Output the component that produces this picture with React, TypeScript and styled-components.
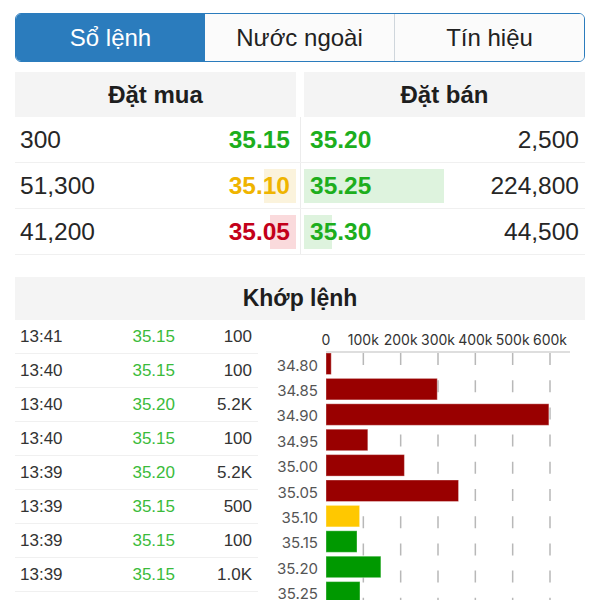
import React from "react";
import styled, { createGlobalStyle } from "styled-components";

const Global = createGlobalStyle`
  html, body { margin: 0; padding: 0; background: #fff; overflow: hidden; }
  body { font-family: "Liberation Sans", Arial, sans-serif; color: #222; }
  * { box-sizing: border-box; }
`;

const Page = styled.div`
  width: 600px;
  height: 600px;
  padding: 13px 15px 0 15px;
  overflow: hidden;
`;

const Tabs = styled.div`
  display: flex;
  height: 49px;
  border: 1px solid #2b7cbd;
  border-radius: 6px;
  overflow: hidden;
`;

const Tab = styled.div<{ $active?: boolean; $divider?: boolean }>`
  flex: 1;
  display: flex;
  align-items: center;
  justify-content: center;
  font-size: 24px;
  background: ${(p) => (p.$active ? "#2b7cbd" : "#fbfbfb")};
  color: ${(p) => (p.$active ? "#fff" : "#222")};
  border-left: ${(p) => (p.$divider ? "1px solid #cfd6dc" : "none")};
`;

const HeaderPair = styled.div`
  display: grid;
  grid-template-columns: 1fr 1fr;
  gap: 8px;
  margin-top: 10px;
`;

const SectionHeader = styled.div`
  height: 45px;
  background: #f4f4f4;
  display: flex;
  align-items: center;
  justify-content: center;
  font-weight: bold;
  font-size: 24px;
  color: #1e1e1e;
`;

const BookRow = styled.div`
  display: grid;
  grid-template-columns: 1fr 8px 1fr;
  height: 46px;
  border-bottom: 1px solid #f0f0f0;
`;

const Divider = styled.div`
  display: flex;
  justify-content: center;
  &::after {
    content: "";
    width: 1px;
    background: #ececec;
  }
`;

const BookCell = styled.div<{ $side: "buy" | "sell" }>`
  position: relative;
  display: flex;
  align-items: center;
  justify-content: space-between;
  padding: 0 6px 0 ${(p) => (p.$side === "buy" ? "5px" : "6px")};
  font-size: 24.5px;
`;

const DepthBar = styled.div<{ $side: "buy" | "sell"; $tone: string }>`
  position: absolute;
  top: 6px;
  bottom: 5px;
  ${(p) => (p.$side === "buy" ? "right: 0;" : "left: 0;")}
  background: ${(p) => p.$tone};
  z-index: 0;
`;

const Qty = styled.span`
  position: relative;
  color: #262626;
`;

const Price = styled.span<{ $color: string }>`
  position: relative;
  font-weight: bold;
  color: ${(p) => p.$color};
`;

const MatchHeader = styled(SectionHeader)`
  margin-top: 22px;
  height: 43px;
  font-size: 23px;
`;

const Bottom = styled.div`
  display: grid;
  grid-template-columns: 243px 1fr;
  gap: 2px;
`;

const TradeList = styled.div`
  display: flex;
  flex-direction: column;
`;

const TradeRow = styled.div`
  display: grid;
  grid-template-columns: 90px 65px 1fr;
  align-items: center;
  height: 34px;
  padding: 0 6px 0 5px;
  border-bottom: 1px solid #f0f0f0;
  font-size: 17px;
  color: #333;
`;

const TradeTime = styled.span``;
const TradePrice = styled.span`
  text-align: right;
  color: #3bbb3b;
`;
const TradeVol = styled.span`
  text-align: right;
`;

const ChartSvg = styled.svg`
  display: block;
  overflow: visible;
  font-family: Inter, "Liberation Sans", sans-serif;
`;

const GREEN = "#1dae1d";
const YELLOW = "#efb400";
const RED = "#c3001a";

const book = [
  { bq: "300", bp: "35.15", bc: GREEN, bw: 0, bt: "", sp: "35.20", sq: "2,500", sw: 0 },
  { bq: "51,300", bp: "35.10", bc: YELLOW, bw: 32, bt: "#fbf3dc", sp: "35.25", sq: "224,800", sw: 140 },
  { bq: "41,200", bp: "35.05", bc: RED, bw: 26, bt: "#fadadc", sp: "35.30", sq: "44,500", sw: 28 },
];

const trades = [
  ["13:41", "35.15", "100"],
  ["13:40", "35.15", "100"],
  ["13:40", "35.20", "5.2K"],
  ["13:40", "35.15", "100"],
  ["13:39", "35.20", "5.2K"],
  ["13:39", "35.15", "500"],
  ["13:39", "35.15", "100"],
  ["13:39", "35.15", "1.0K"],
];

const bars: [string, number, string][] = [
  ["34.80", 14, "#990000"],
  ["34.85", 298, "#990000"],
  ["34.90", 597, "#990000"],
  ["34.95", 112, "#990000"],
  ["35.00", 210, "#990000"],
  ["35.05", 355, "#990000"],
  ["35.10", 90, "#ffc800"],
  ["35.15", 83, "#009900"],
  ["35.20", 147, "#009900"],
  ["35.25", 91, "#009900"],
];

const X0 = 66;
const SCALE = 224 / 600;
const ticks = [0, 100, 200, 300, 400, 500, 600];

function VolumeChart() {
  return (
    <ChartSvg width={325} height={280} viewBox="0 0 325 280">
      {ticks.slice(1).map((t) => (
        <line
          key={`g${t}`}
          x1={X0 + t * SCALE}
          x2={X0 + t * SCALE}
          y1={33}
          y2={290}
          stroke="#b8b8b8"
          strokeWidth={1.5}
          strokeDasharray="12 15.2"
        />
      ))}
      <line x1={X0} x2={310} y1={32} y2={32} stroke="#bdbdbd" strokeWidth={1} />
      {ticks.map((t) => (
        <text
          key={`t${t}`}
          x={X0 + t * SCALE}
          y={25}
          fontSize={14}
          fill="#333"
          textAnchor="middle"
        >
          {t === 0 ? "0" : `${t}k`}
        </text>
      ))}
      {bars.map(([label, v, color], i) => (
        <g key={label}>
          <rect
            x={X0}
            y={33 + i * 25.4}
            width={Math.max(v * SCALE, 1)}
            height={21.5}
            fill={color}
            stroke="rgba(255,255,255,0.35)"
            strokeWidth={1}
          />
          <text
            x={58}
            y={45 + i * 25.4}
            fontSize={15}
            fill="#555"
            textAnchor="end"
            dominantBaseline="central"
          >
            {label}
          </text>
        </g>
      ))}
    </ChartSvg>
  );
}

export default function App() {
  return (
    <>
      <Global />
      <Page>
        <Tabs>
          <Tab $active>Sổ lệnh</Tab>
          <Tab>Nước ngoài</Tab>
          <Tab $divider>Tín hiệu</Tab>
        </Tabs>

        <HeaderPair>
          <SectionHeader>Đặt mua</SectionHeader>
          <SectionHeader>Đặt bán</SectionHeader>
        </HeaderPair>

        {book.map((r) => (
          <BookRow key={r.bp}>
            <BookCell $side="buy">
              {r.bw > 0 && <DepthBar $side="buy" $tone={r.bt} style={{ width: r.bw }} />}
              <Qty>{r.bq}</Qty>
              <Price $color={r.bc}>{r.bp}</Price>
            </BookCell>
            <Divider />
            <BookCell $side="sell">
              {r.sw > 0 && <DepthBar $side="sell" $tone="#def3de" style={{ width: r.sw }} />}
              <Price $color={GREEN}>{r.sp}</Price>
              <Qty>{r.sq}</Qty>
            </BookCell>
          </BookRow>
        ))}

        <MatchHeader>Khớp lệnh</MatchHeader>

        <Bottom>
          <TradeList>
            {trades.map(([t, p, v], i) => (
              <TradeRow key={i}>
                <TradeTime>{t}</TradeTime>
                <TradePrice>{p}</TradePrice>
                <TradeVol>{v}</TradeVol>
              </TradeRow>
            ))}
          </TradeList>
          <VolumeChart />
        </Bottom>
      </Page>
    </>
  );
}
